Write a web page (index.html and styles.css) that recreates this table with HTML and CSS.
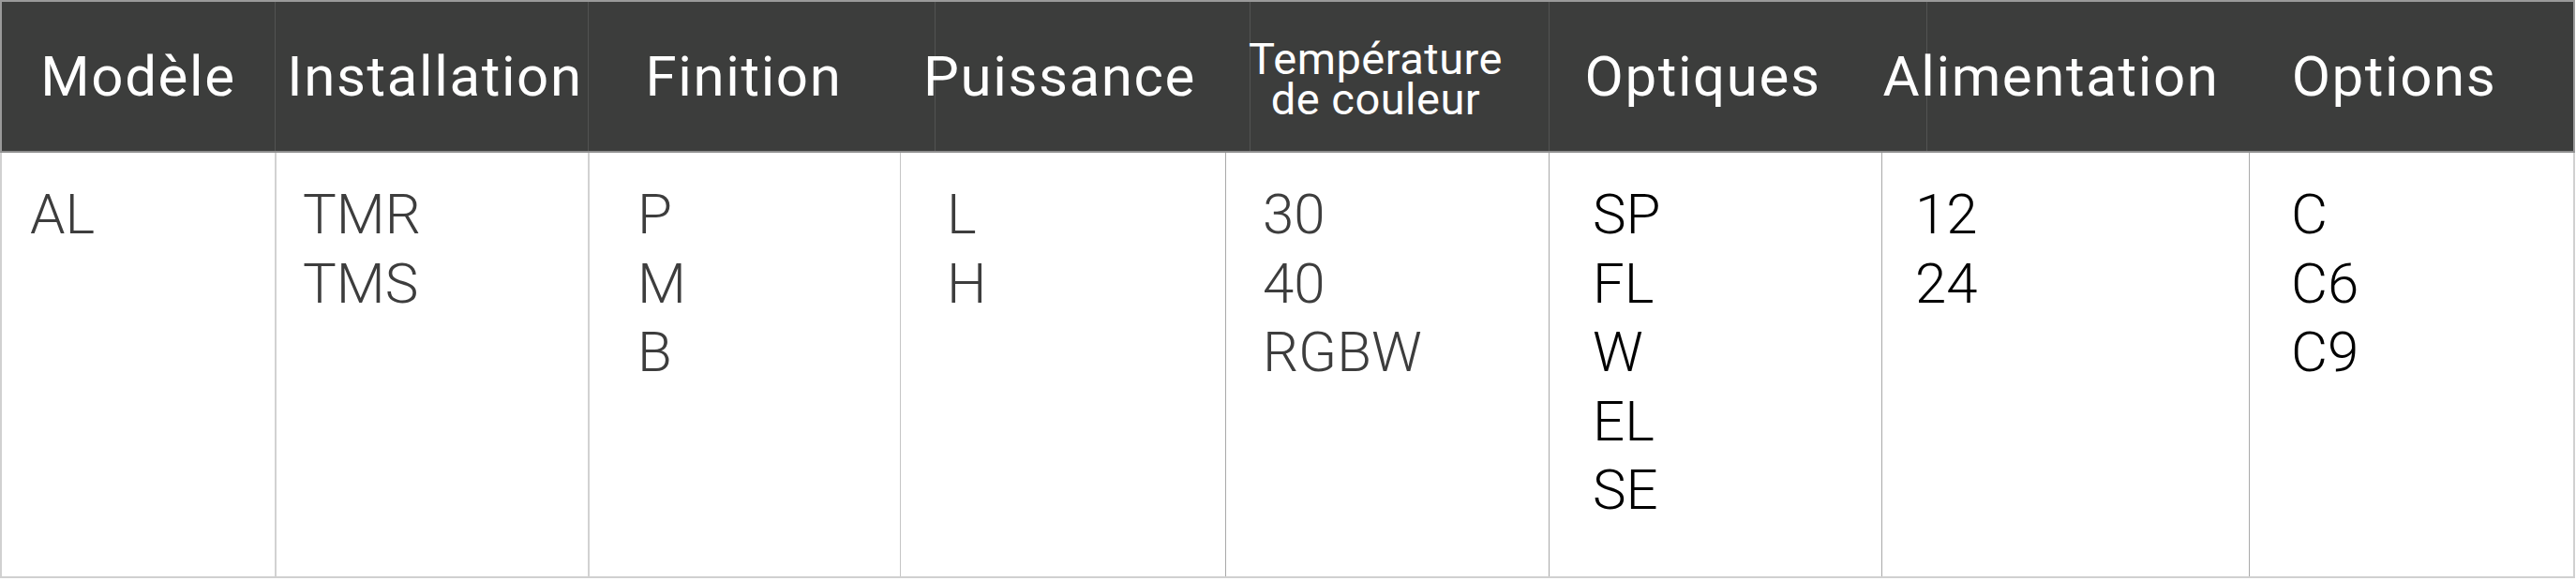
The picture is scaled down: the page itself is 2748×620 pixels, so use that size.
FILE: index.html
```html
<!DOCTYPE html>
<html lang="fr">
<head>
<meta charset="utf-8">
<title>Codification</title>
<link rel="stylesheet" href="styles.css">
</head>
<body>
<div class="spec-table">
  <div class="head grid">
    <div class="hline hl1"></div>
    <div class="hline hl2"></div>
    <div class="hline hl3"></div>
    <div class="hline hl4"></div>
    <div class="hline hl5"></div>
    <div class="hline hl6"></div>
    <div class="hline hl7"></div>
    <div class="htext c1">Modèle</div>
    <div class="htext c2">Installation</div>
    <div class="htext c3">Finition</div>
    <div class="htext c4">Puissance</div>
    <div class="htext c5 small"><span>Température</span><span>de couleur</span></div>
    <div class="htext c6">Optiques</div>
    <div class="htext c7">Alimentation</div>
    <div class="htext c8">Options</div>
  </div>
  <div class="body grid">
    <div class="cell c1"><span>AL</span></div>
    <div class="cell c2"><span>TMR</span><span>TMS</span></div>
    <div class="cell c3"><span>P</span><span>M</span><span>B</span></div>
    <div class="cell c4"><span>L</span><span>H</span></div>
    <div class="cell c5"><span>30</span><span>40</span><span>RGBW</span></div>
    <div class="cell c6 dark"><span>SP</span><span>FL</span><span>W</span><span>EL</span><span>SE</span></div>
    <div class="cell c7 dark"><span>12</span><span>24</span></div>
    <div class="cell c8 dark"><span>C</span><span>C6</span><span>C9</span></div>
  </div>
</div>
</body>
</html>
```
FILE: styles.css
```css
html, body {
  margin: 0;
  padding: 0;
  background: #ffffff;
}
body {
  font-family: Roboto, "Liberation Sans", sans-serif;
}
.spec-table {
  width: 2747px;
  box-sizing: border-box;
}
.grid {
  display: grid;
  grid-template-columns: 291px 334px 333px 37px 310px 26px 319px 355px 48px 344px 1fr;
}
.head {
  background: #3c3d3c;
  height: 163px;
  box-sizing: border-box;
  border: 2px solid #9a9a9a;
  border-bottom: 2px solid #8e8e8e;
  grid-template-rows: 159px;
}
.hline {
  grid-row: 1;
  border-left: 1px solid #525352;
}
.hl1 { grid-column: 1 / 2; border-left: none; }
.hl2 { grid-column: 2 / 3; }
.hl3 { grid-column: 3 / 5; }
.hl4 { grid-column: 5 / 7; }
.hl5 { grid-column: 7 / 8; }
.hl6 { grid-column: 8 / 10; }
.hl7 { grid-column: 10 / 12; }
.htext {
  grid-row: 1;
  display: flex;
  align-items: center;
  justify-content: center;
  text-align: center;
  color: #ffffff;
  font-size: 60px;
  font-weight: 400;
  letter-spacing: 1.6px;
  white-space: nowrap;
  min-width: 0;
}
.htext.small {
  flex-direction: column;
  font-size: 47px;
  line-height: 43px;
  letter-spacing: 0.5px;
  padding-right: 24px;
  padding-top: 4px;
}
.htext.small span {
  display: block;
}
.head .c1 { grid-column: 1 / 2; }
.head .c2 { grid-column: 2 / 3; padding-left: 8px; }
.head .c3 { grid-column: 3 / 4; }
.head .c4 { grid-column: 4 / 6; padding-right: 6px; }
.head .c5 { grid-column: 6 / 8; }
.head .c6 { grid-column: 8 / 9; padding-right: 26px; }
.head .c7 { grid-column: 9 / 11; padding-right: 30px; }
.head .c8 { grid-column: 11 / 12; padding-right: 36px; }

.body {
  height: 454px;
  box-sizing: border-box;
  border: 2px solid #d0d0d0;
  border-top: none;
}
.cell {
  display: flex;
  flex-direction: column;
  align-items: flex-start;
  padding-top: 29px;
  font-size: 60px;
  font-weight: 300;
  line-height: 73.6px;
  color: #3d3d3d;
  min-width: 0;
}
.cell.dark {
  color: #000000;
}
.body .c1 { grid-column: 1 / 2; padding-left: 30px; }
.body .c2 { grid-column: 2 / 3; padding-left: 28px; border-left: 2px solid #d2d2d2; }
.body .c3 { grid-column: 3 / 4; padding-left: 51px; border-left: 2px solid #d2d2d2; }
.body .c4 { grid-column: 4 / 6; padding-left: 49px; border-left: 1px solid #c6c6c6; }
.body .c5 { grid-column: 6 / 8; padding-left: 39px; border-left: 1px solid #a9a9a9; }
.body .c6 { grid-column: 8 / 9; padding-left: 46px; border-left: 1px solid #a9a9a9; }
.body .c7 { grid-column: 9 / 11; padding-left: 35px; border-left: 1px solid #a9a9a9; }
.body .c8 { grid-column: 11 / 12; padding-left: 44px; border-left: 1px solid #a9a9a9; }
```
